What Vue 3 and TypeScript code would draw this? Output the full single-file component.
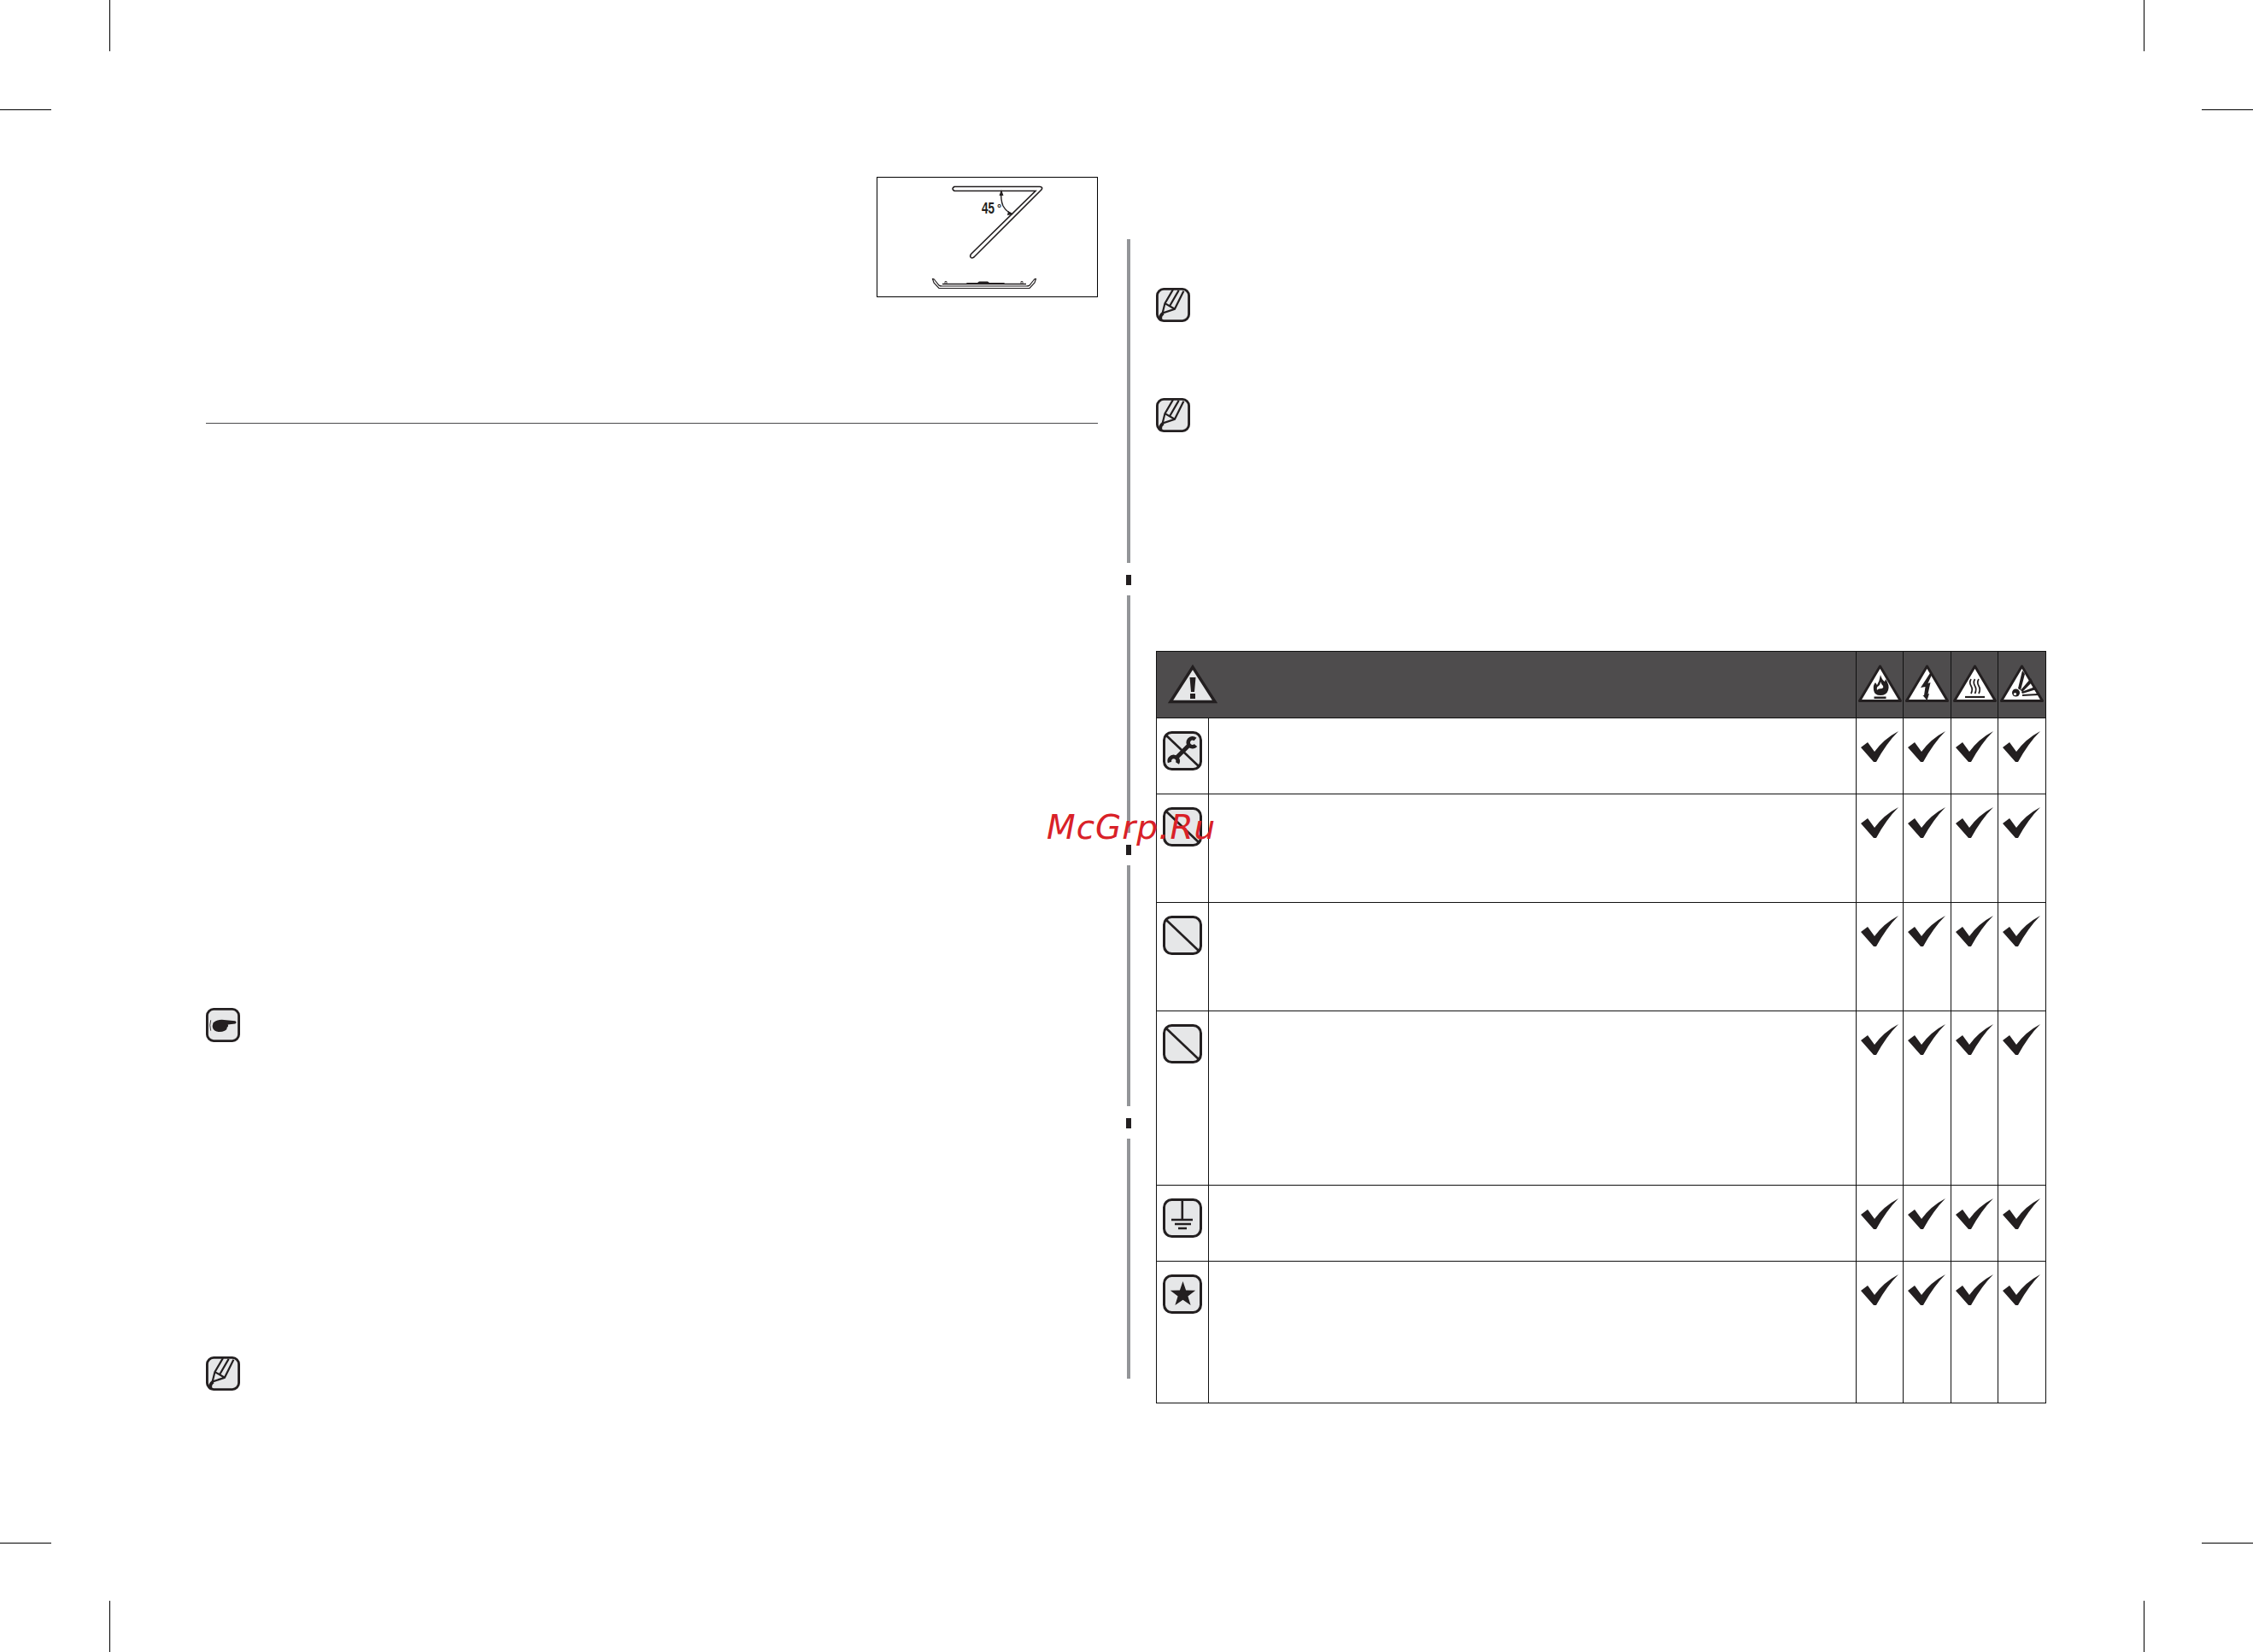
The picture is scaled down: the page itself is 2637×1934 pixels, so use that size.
<script setup lang="ts">
interface Row { height: number; icon: string }
const rows: Row[] = [
  { height: 89, icon: 'tools' },
  { height: 127, icon: 'ban' },
  { height: 127, icon: 'ban' },
  { height: 204, icon: 'ban' },
  { height: 89, icon: 'earth' },
  { height: 165, icon: 'star' },
]
const hazards = ['fire', 'shock', 'hot', 'blast']
const marks = ['v tl', 'h tl', 'v tr', 'h tr', 'v bl', 'h bl', 'v br', 'h br']
</script>

<template>
  <div class="page">
    <span v-for="m in marks" :key="m" class="crop" :class="m"></span>

    <section class="left">
      <div class="figure-row">
        <div class="figure">
          <svg width="257" height="139" viewBox="0 0 257 139">
            <path d="M90 10.500 L190 10.500 Q194 11 192 14 L113 93 Q110 95 109 93 Q108 91 110 89 L185 15.500 L90 15.500 Q86 13 90 10.500Z" fill="#fff" stroke="#231f20" stroke-width="1.600" />
            <path d="M145 16 Q144 26 147 33 Q151 40 157 42" fill="none" stroke="#231f20" stroke-width="1.400" />
            <path d="M145 14 L142.500 21 L147.500 21Z M159 43 L153 39 L152 44Z" fill="#231f20" />
            <text x="122" y="42" class="deg" textLength="15" lengthAdjust="spacingAndGlyphs">45</text>
            <text x="140" y="40" class="deg-o">°</text>
            <path d="M64.500 118.500 Q66 118 68 121 L72 126 Q73 127 76 127 L174 127 Q177 127 178 126 L182 121 Q184 118 185.500 118.500 L184 123 L178 129.500 L72 129.500 L66 123Z" fill="none" stroke="#231f20" stroke-width="1.200" />
            <path d="M76 124.500 L174 124.500" stroke="#231f20" stroke-width="1.300" />
            <path d="M105 123 L148 123 L150 124.500 L103 124.500Z M119 121.500 L129 121.500 L131 123 L117 123Z" fill="#231f20" />
            <path d="M79 121.500 h2 v3 h-2Z M168 121.500 h2 v3 h-2Z" fill="none" stroke="#231f20" stroke-width=".8" />
          </svg>
        </div>
      </div>
      <hr class="rule" />
      <div class="note-icon hand-slot">
        <svg class="ico" viewBox="0 0 42 42">
          <rect x="1.500" y="1.500" width="39" height="39" rx="8" fill="#e6e7e8" stroke="#231f20" stroke-width="3" />
          <path d="M9 18 Q15 13 25 15 L36 16 Q38.500 17.800 36 19.500 L27 20.500 Q28 23 26 24 Q26 27 23 28 Q19 30 13 29 Q8 27 8 22Z" fill="#231f20" />
          <path d="M6 15 Q4 21 6 28" fill="none" stroke="#231f20" stroke-width=".9" />
        </svg>
      </div>
      <div class="note-icon pencil-slot">
        <svg class="ico" viewBox="0 0 42 42">
          <rect x="1.500" y="1.500" width="39" height="39" rx="8" fill="#e6e7e8" stroke="#231f20" stroke-width="3" />
          <path d="M21 2 L11 19 L8 31 L23 26 L34 4 M28 3 L17 22 M11 19 L23 26" fill="none" stroke="#231f20" stroke-width="2.300" />
          <path d="M9 31 Q4 34 6 40" fill="none" stroke="#231f20" stroke-width="4" />
        </svg>
      </div>
    </section>

    <div class="divider">
      <div class="seg s1"></div><div class="tick"></div>
      <div class="seg s2"></div><div class="tick"></div>
      <div class="seg s3"></div><div class="tick"></div>
      <div class="seg s4"></div>
    </div>

    <section class="right">
      <div class="note-icon pencil-a">
        <svg class="ico" viewBox="0 0 42 42">
          <rect x="1.500" y="1.500" width="39" height="39" rx="8" fill="#e6e7e8" stroke="#231f20" stroke-width="3" />
          <path d="M21 2 L11 19 L8 31 L23 26 L34 4 M28 3 L17 22 M11 19 L23 26" fill="none" stroke="#231f20" stroke-width="2.300" />
          <path d="M9 31 Q4 34 6 40" fill="none" stroke="#231f20" stroke-width="4" />
        </svg>
      </div>
      <div class="note-icon pencil-b">
        <svg class="ico" viewBox="0 0 42 42">
          <rect x="1.500" y="1.500" width="39" height="39" rx="8" fill="#e6e7e8" stroke="#231f20" stroke-width="3" />
          <path d="M21 2 L11 19 L8 31 L23 26 L34 4 M28 3 L17 22 M11 19 L23 26" fill="none" stroke="#231f20" stroke-width="2.300" />
          <path d="M9 31 Q4 34 6 40" fill="none" stroke="#231f20" stroke-width="4" />
        </svg>
      </div>

      <div class="table">
        <div class="head">
          <div class="head-main">
            <svg class="warn" width="58" height="48" viewBox="0 0 58 48">
              <path d="M29 4 L55 44.500 L3 44.500Z" fill="#e6e7e8" stroke="#231f20" stroke-width="3.400" stroke-linejoin="miter" />
              <path d="M25.500 16 h7 l-1.500 17 h-4Z M26 35 h6 v6 h-6Z" fill="#231f20" />
            </svg>
          </div>
          <div v-for="h in hazards" :key="h" class="head-cell">
            <svg width="53" height="47" viewBox="0 0 53 47">
              <path d="M26.500 3 L50.500 43.500 L2.500 43.500Z" fill="#fff" stroke="#231f20" stroke-width="3" stroke-linejoin="round" />
              <template v-if="h === 'fire'">
                <path d="M27 13 Q28 18 32 21 L33 18 Q38 25 36 31 Q34 37 27 37 Q20 37 19 31 Q18 25 21 22 L23 25 Q26 20 27 13Z" fill="#231f20" />
                <path d="M27 21 Q28 24 30 26 Q31 28 29 29 Q24 29 23 31 Q22 27 25 26 Q27 24 27 21Z" fill="#fff" />
                <path d="M19.500 38.500 h14 v2.500 h-14Z" fill="#231f20" />
              </template>
              <template v-else-if="h === 'shock'">
                <path d="M30 11 L19 28 L24.500 27 L23 37 L21.500 37 L26.500 43 L29 35 L27.500 35.500 L30.500 22 L27.500 23 L32.500 12Z" fill="#231f20" />
              </template>
              <template v-else-if="h === 'hot'">
                <path d="M22 18 Q19.500 22 22 26 Q24.500 30 22 35 M26.500 18 Q24 22 26.500 26 Q29 30 26.500 35 M31 18 Q28.500 22 31 26 Q33.500 30 31 35" fill="none" stroke="#231f20" stroke-width="1.700" />
                <path d="M15 39 H38" stroke="#231f20" stroke-width="2.200" />
              </template>
              <template v-else>
                <circle cx="19.500" cy="34" r="4.500" fill="#231f20" />
                <circle cx="18.500" cy="35.500" r="1.600" fill="#fff" />
                <path d="M22 29 L27 8 L30 12 L25 31Z M25 31 L37 17 L39 21 L27 33Z M26 33 L42 27 L43.500 30 L27 35Z M27 36 L45 35 L46 37 L27 38Z" fill="#231f20" />
              </template>
            </svg>
          </div>
        </div>
        <div v-for="(r, i) in rows" :key="i" class="row" :style="{ height: r.height + 'px' }">
          <div class="icon-cell">
            <svg class="ico big" viewBox="0 0 46 46">
              <rect x="1.500" y="1.500" width="43" height="43" rx="9" fill="#e6e7e8" stroke="#231f20" stroke-width="3" />
              <path v-if="r.icon === 'tools' || r.icon === 'ban'" d="M3 4 L43 42" stroke="#231f20" stroke-width="2.600" />
              <template v-if="r.icon === 'tools'">
                <path d="M16 31 L30 17" stroke="#231f20" stroke-width="5" />
                <path d="M38 9.500 A5 5 0 1 0 38.500 16.500" fill="none" stroke="#231f20" stroke-width="4.600" />
                <path d="M8 36.500 A5 5 0 1 1 17 37.500" fill="none" stroke="#231f20" stroke-width="4.600" />
              </template>
              <template v-else-if="r.icon === 'earth'">
                <path d="M22.800 2 V25 M10 25 H35 M14 30 H33 M18 35 H28" stroke="#231f20" stroke-width="2.600" fill="none" />
              </template>
              <path v-else-if="r.icon === 'star'" d="M23.500 8 L27.100 18.500 L38.200 18.700 L29.400 25.400 L32.600 36 L23.500 29.700 L14.400 36 L17.600 25.400 L8.800 18.700 L19.900 18.500Z" fill="#231f20" />
            </svg>
          </div>
          <div class="text-cell"></div>
          <div v-for="h in hazards" :key="h" class="check-cell">
            <svg width="44" height="36" viewBox="0 0 44 36">
              <path d="M0 19 L8 13 L16 24 Q27 9 44 0 Q30 14 18 36 L15 36Z" fill="#231f20" />
            </svg>
          </div>
        </div>
      </div>
    </section>

    <div class="watermark">McGrp.Ru</div>
  </div>
</template>

<style scoped>
.page {
  position: relative;
  width: 2637px;
  height: 1934px;
  background: #fff;
  overflow: hidden;
  display: flex;
  align-items: flex-start;
  font-family: "DejaVu Sans", sans-serif;
}
.crop { position: absolute; background: #000; }
.crop.v { width: 1px; height: 60px; }
.crop.h { width: 60px; height: 1px; }
.v.tl { left: 128px; top: 0; }
.h.tl { left: 0; top: 128px; }
.v.tr { left: 2509px; top: 0; }
.h.tr { left: 2577px; top: 128px; }
.v.bl { left: 128px; top: 1874px; }
.h.bl { left: 0; top: 1806px; }
.v.br { left: 2509px; top: 1874px; }
.h.br { left: 2577px; top: 1806px; }

.left {
  width: 1044px;
  margin-left: 241px;
  padding-top: 207px;
  flex: none;
}
.figure-row { display: flex; justify-content: flex-end; }
.figure { width: 259px; height: 141px; box-sizing: border-box; border: 1px solid #000; }
.figure svg { display: block; }
.deg { font: bold 18px "Liberation Sans", sans-serif; fill: #231f20; }
.deg-o { font: bold 13px "Liberation Sans", sans-serif; fill: #231f20; }
.rule { margin: 147px 0 0; border: 0; height: 1px; background: #4a4a4c; }
.ico { display: block; width: 40px; height: 40px; }
.ico.big { width: 46px; height: 46px; }
.note-icon { height: 40px; }
.hand-slot { margin-top: 684px; }
.pencil-slot { margin-top: 368px; }

.divider { margin-left: 33px; padding-top: 280px; width: 6px; flex: none; display: flex; flex-direction: column; align-items: center; }
.seg { width: 4px; background: #939598; }
.tick { width: 6px; height: 12px; background: #231f20; margin: 14px 0 12px; }
.s1 { height: 379px; }
.s2 { height: 278px; }
.s3 { height: 282px; }
.s4 { height: 281px; }

.right { width: 1042px; margin-left: 29px; flex: none; padding-top: 337px; }
.pencil-a { margin-bottom: 89px; }
.pencil-b { margin-bottom: 256px; }

.table { box-sizing: border-box; border: 1px solid #111; width: 1042px; }
.head { display: flex; height: 78px; box-sizing: border-box; background: #4e4c4d; border-bottom: 1px solid #111; }
.head-main { flex: 1; padding: 14px 0 0 13px; }
.warn { display: block; }
.head-cell { width: 55px; flex: none; box-sizing: border-box; border-left: 1px solid #111; display: flex; justify-content: center; padding-top: 14px; }
.head-cell:nth-child(odd) { width: 56px; }
.head-cell svg { display: block; }
.row { display: flex; box-sizing: border-box; border-bottom: 1px solid #111; }
.row:last-child { border-bottom: 0; }
.icon-cell { width: 60px; flex: none; box-sizing: border-box; padding: 15px 0 0 7px; }
.text-cell { flex: 1; border-left: 1px solid #111; }
.check-cell { width: 55px; flex: none; box-sizing: border-box; border-left: 1px solid #111; padding: 15px 0 0 5px; }
.check-cell:nth-child(even) { width: 56px; }
.check-cell svg { display: block; }

.watermark {
  position: absolute;
  left: 1225px;
  top: 949px;
  font: oblique 39px "DejaVu Sans", sans-serif;
  letter-spacing: 1px;
  color: #d92128;
  line-height: 1;
}
</style>
